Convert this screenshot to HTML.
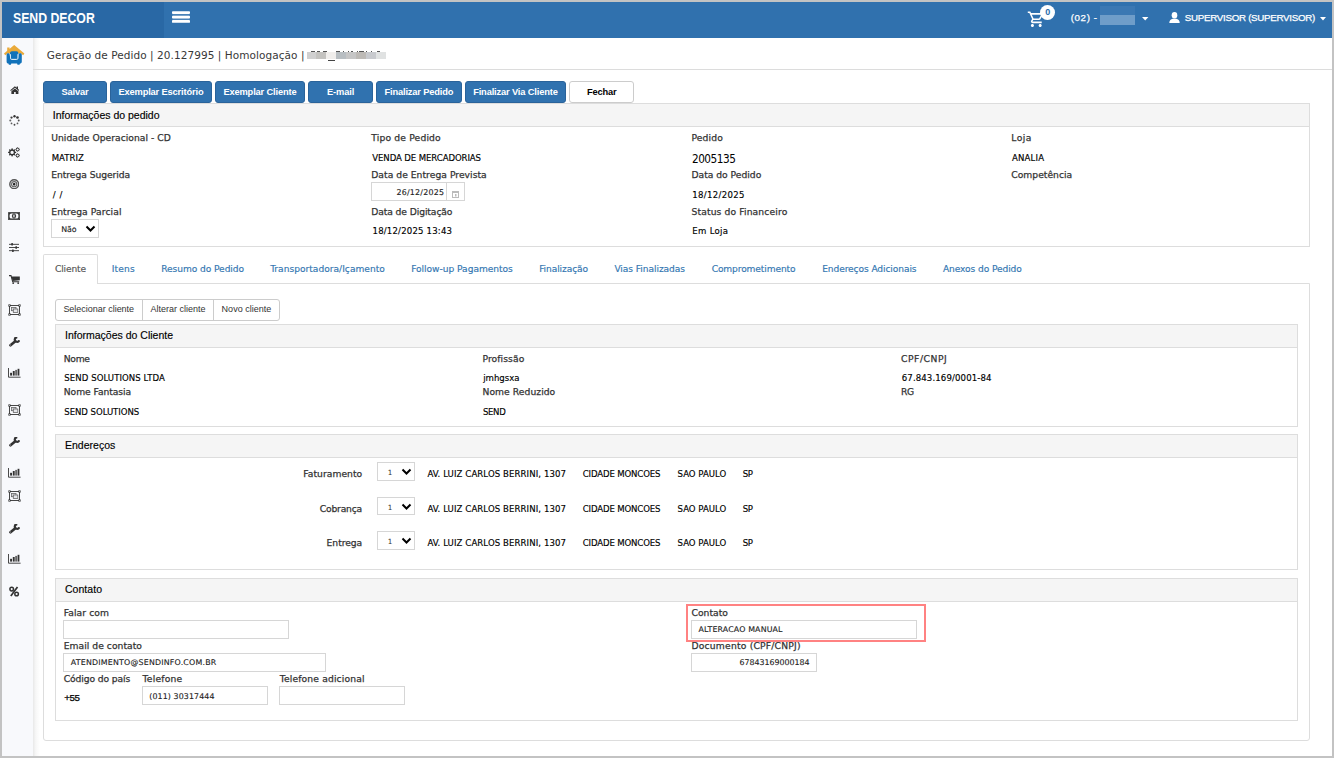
<!DOCTYPE html>
<html lang="pt-BR">
<head>
<meta charset="utf-8">
<title>Geração de Pedido</title>
<style>
html,body{margin:0;padding:0}
body{width:1334px;height:758px;overflow:hidden;background:#fff;position:relative;font-family:"Liberation Sans",sans-serif;font-size:10.5px}
div,span,svg{position:absolute;box-sizing:border-box}
.t{white-space:nowrap;line-height:1.2;transform-origin:0 50%}
#frame{left:0;top:0;width:1334px;height:758px;border:2px solid #c3c3c3;z-index:50;pointer-events:none}
#hdr{left:2px;top:2px;width:1330px;height:36px;background:#3071ae}
#logo{left:2px;top:2px;width:162px;height:36px;background:#2968a5}
#side{left:2px;top:38px;width:31px;height:718px;background:#f8f9fc}
#sideshadow{left:33px;top:38px;width:7px;height:718px;background:linear-gradient(to right,rgba(0,0,0,.09),rgba(0,0,0,.03) 40%,rgba(0,0,0,0))}
#tline{left:33px;top:69px;width:1299px;height:1px;background:#dcdcdc}
.bp{top:81px;height:22px;background:#3072af;border:1px solid #2a639a;border-radius:3px}
.bd{top:81px;height:22px;background:#fff;border:1px solid #ccc;border-radius:3px}
.panel{border:1px solid #ddd;background:#fff}
.ph{left:0;top:0;right:0;height:23px;background:#f5f5f5;border-bottom:1px solid #ddd}
.in{border:1px solid #d6d6d6;background:#fff}
#tabact{left:43px;top:254px;width:55px;height:30px;border:1px solid #ddd;border-bottom:0;border-radius:2px 2px 0 0;background:#fff}
#tabc{left:43px;top:283px;width:1267px;height:458px;border:1px solid #ddd;border-radius:0 0 3px 3px}
#bgrp{left:55px;top:299px;width:225px;height:22px;border:1px solid #ccc;border-radius:3px;background:#fff}
#bgrp i{position:absolute;top:0;width:1px;height:20px;background:#ccc}
#hl{left:686px;top:604px;width:240px;height:38px;border:2px solid #ff8282}
.blur{background:#d9d9d9}

.lbl{font-family:"DejaVu Sans", "Liberation Sans", sans-serif;font-size:9.2px;font-weight:400;color:#333;-webkit-text-stroke:0.25px #333}
.val{font-family:"DejaVu Sans Condensed", "DejaVu Sans", "Liberation Sans", sans-serif;font-size:9.5px;font-weight:400;color:#000;-webkit-text-stroke:0.15px #000;font-stretch:condensed}
.tab{font-family:"DejaVu Sans", "Liberation Sans", sans-serif;font-size:9.1px;font-weight:400;color:#3276b1;-webkit-text-stroke:0.15px #3276b1}
.taba{font-family:"DejaVu Sans", "Liberation Sans", sans-serif;font-size:9.1px;font-weight:400;color:#555;-webkit-text-stroke:0.15px #555}
.hd{font-family:"Liberation Sans", sans-serif;font-size:10.5px;font-weight:400;color:#000;-webkit-text-stroke:0.15px #000}
.btn{font-family:"Liberation Sans", sans-serif;font-size:9.3px;font-weight:700;color:#fff}
.btnd{font-family:"Liberation Sans", sans-serif;font-size:9.3px;font-weight:700;color:#000}
.bg{font-family:"Liberation Sans", sans-serif;font-size:9px;font-weight:400;color:#333}
.inp{font-family:"DejaVu Sans", "Liberation Sans", sans-serif;font-size:7.9px;font-weight:400;color:#222;-webkit-text-stroke:0.12px #222}
.sel1{font-family:"DejaVu Sans", "Liberation Sans", sans-serif;font-size:7.2px;font-weight:400;color:#333}
.title{font-family:"DejaVu Sans", "Liberation Sans", sans-serif;font-size:10.5px;font-weight:400;color:#383838}
.brand{font-family:"Liberation Sans", sans-serif;font-size:14px;font-weight:700;color:#fff}
.nav{font-family:"Liberation Sans", sans-serif;font-size:9.75px;font-weight:400;color:#fff;-webkit-text-stroke:0.25px #fff}
.vall{font-family:"Liberation Sans", sans-serif;font-size:9.75px;font-weight:400;color:#000;-webkit-text-stroke:0.25px #000}
.big{font-family:"DejaVu Sans Condensed", "DejaVu Sans", "Liberation Sans", sans-serif;font-size:11.7px;font-weight:400;color:#000;font-stretch:condensed}
.badge{font-family:"Liberation Sans", sans-serif;font-size:9px;font-weight:700;color:#2a6cab}
.pct{font-family:"Liberation Sans", sans-serif;font-size:12.5px;font-weight:700;color:#3a3a3a}
</style>
</head>
<body>
<div id="hdr"></div>
<div id="logo"></div>
<div id="side"></div>
<div id="sideshadow"></div>
<div id="tline"></div>
<svg style="left:4.4px;top:44.8px" width="20.4" height="20.2" viewBox="0 0 20.4 20.2"><path fill="#eaaa3a" d="M10.200 0L0 8.600l1.200 1.700 2.300-1.700h13.400l2.300 1.700 1.200-1.700z"/><path fill="#eaaa3a" d="M3.200 2.600h2.400v3.400l-2.400 2z"/><path fill="#1172ba" d="M2.600 9.800c0-2 2.800-2 3.100-0.300l0.500 4h8l0.500-4c0.300-1.700 3.100-1.700 3.100 0.300v6.700c0 1.400-0.800 2.100-1.800 2.100l-0.500 1.200h-2l-0.400-1.200H7.300l-0.400 1.200H4.900l-0.500-1.200c-1 0-1.800-0.700-1.800-2.100z"/><path fill="#1172ba" d="M6 8.200c0-1.300 0.900-2 1.900-2h4.600c1 0 1.900 0.700 1.900 2v5.600H6z"/><path fill="none" stroke="#f0f6fb" stroke-width="0.900" d="M6.500 9.200v4.100c0 0.800 0.500 1.200 1.200 1.200h5c0.700 0 1.200-0.400 1.200-1.200V9.200"/></svg>
<svg style="left:9.5px;top:85.7px" width="9.8" height="8.5" viewBox="0 0 12 10.2"><path fill="#333" d="M6 0.300L0.300 5.100l0.800 0.900L6 1.900l4.900 4.100 0.800-0.900-1.900-1.600V0.500H8.100v1.600z"/><path fill="#333" d="M6 2.900L1.700 6.400V10h3.300V7.100h2V10h3.300V6.400z"/></svg>
<svg style="left:8.9px;top:115.1px" width="11" height="11" viewBox="0 0 12 12"><circle cx="6.00" cy="1.40" r="1.3" fill="#333" opacity="1"/><circle cx="9.25" cy="2.75" r="1.45" fill="#333" opacity="1"/><circle cx="10.60" cy="6.00" r="1.05" fill="#333" opacity="0.85"/><circle cx="9.25" cy="9.25" r="0.95" fill="#333" opacity="0.8"/><circle cx="6.00" cy="10.60" r="1.0" fill="#333" opacity="0.9"/><circle cx="2.75" cy="9.25" r="0.95" fill="#333" opacity="0.8"/><circle cx="1.40" cy="6.00" r="1.1" fill="#333" opacity="0.75"/><circle cx="2.75" cy="2.75" r="1.25" fill="#333" opacity="0.95"/></svg>
<svg style="left:7.9px;top:147.1px" width="12" height="11" viewBox="0 0 12 11"><path fill="#333" fill-rule="evenodd" d="M8.18,5.00L8.18,5.80L7.00,6.28L6.78,6.83L7.27,8.00L6.70,8.57L5.53,8.08L4.98,8.30L4.50,9.48L3.70,9.48L3.22,8.30L2.67,8.08L1.50,8.57L0.93,8.00L1.42,6.83L1.20,6.28L0.02,5.80L0.02,5.00L1.20,4.52L1.42,3.97L0.93,2.80L1.50,2.23L2.67,2.72L3.22,2.50L3.70,1.32L4.50,1.32L4.98,2.50L5.53,2.72L6.70,2.23L7.27,2.80L6.78,3.97L7.00,4.52zM5.80,5.40A1.7,1.7 0 1 0 2.40,5.40A1.7,1.7 0 1 0 5.80,5.40z"/><path fill="#333" fill-rule="evenodd" d="M11.89,2.27L11.89,2.73L11.23,2.99L11.10,3.30L11.38,3.96L11.06,4.28L10.40,4.00L10.09,4.13L9.83,4.79L9.37,4.79L9.11,4.13L8.80,4.00L8.14,4.28L7.82,3.96L8.10,3.30L7.97,2.99L7.31,2.73L7.31,2.27L7.97,2.01L8.10,1.70L7.82,1.04L8.14,0.72L8.80,1.00L9.11,0.87L9.37,0.21L9.83,0.21L10.09,0.87L10.40,1.00L11.06,0.72L11.38,1.04L11.10,1.70L11.23,2.01zM10.70,2.50A1.1,1.1 0 1 0 8.50,2.50A1.1,1.1 0 1 0 10.70,2.50z"/><path fill="#333" fill-rule="evenodd" d="M11.89,8.27L11.89,8.73L11.23,8.99L11.10,9.30L11.38,9.96L11.06,10.28L10.40,10.00L10.09,10.13L9.83,10.79L9.37,10.79L9.11,10.13L8.80,10.00L8.14,10.28L7.82,9.96L8.10,9.30L7.97,8.99L7.31,8.73L7.31,8.27L7.97,8.01L8.10,7.70L7.82,7.04L8.14,6.72L8.80,7.00L9.11,6.87L9.37,6.21L9.83,6.21L10.09,6.87L10.40,7.00L11.06,6.72L11.38,7.04L11.10,7.70L11.23,8.01zM10.70,8.50A1.1,1.1 0 1 0 8.50,8.50A1.1,1.1 0 1 0 10.70,8.50z"/></svg>
<svg style="left:9px;top:178.9px" width="10.4" height="10.4" viewBox="0 0 10.4 10.4"><circle cx="5.2" cy="5.2" r="4.400" fill="none" stroke="#555" stroke-width="1.400"/><circle cx="5.2" cy="5.2" r="2.600" fill="none" stroke="#666" stroke-width="1.100"/><rect x="4" y="4" width="2.400" height="2.400" rx="0.700" fill="#222"/></svg>
<svg style="left:8.3px;top:212px" width="12" height="8" viewBox="0 0 12 8"><rect x="0" y="0" width="12" height="8" fill="#333"/><rect x="1.600" y="1.500" width="8.800" height="5" rx="1.600" fill="#f8f9fc"/><ellipse cx="6" cy="4" rx="1.700" ry="2.100" fill="none" stroke="#333" stroke-width="1"/><rect x="5.650" y="2.500" width="0.800" height="3" fill="#333"/><rect x="0.700" y="0.700" width="10.600" height="6.600" fill="none" stroke="#f8f9fc" stroke-width="0.3" opacity=".5"/></svg>
<svg style="left:9.2px;top:243px" width="10.2" height="9" viewBox="0 0 10.2 9"><rect x="0" y="0.85" width="10.2" height="0.9" fill="#333"/><rect x="2.30" y="0.00" width="1.600" height="2.600" rx="0.3" fill="#333"/><rect x="0" y="4.05" width="10.2" height="0.9" fill="#333"/><rect x="6.40" y="3.20" width="1.600" height="2.600" rx="0.3" fill="#333"/><rect x="0" y="7.25" width="10.2" height="0.9" fill="#333"/><rect x="3.10" y="6.40" width="1.600" height="2.600" rx="0.3" fill="#333"/></svg>
<svg style="left:9.2px;top:275px" width="10.8" height="9.1" viewBox="0 0 10.8 9.1"><path fill="none" stroke="#333" stroke-width="1.1" d="M0 0.6h2l1.700 6.200h6.500"/><path fill="#333" d="M2.600 1.600h8.200v3.600L3.600 6z"/><circle cx="4.200" cy="8.100" r="0.950" fill="#333"/><circle cx="9.200" cy="8.100" r="0.950" fill="#333"/></svg>
<svg style="left:8px;top:304px" width="13" height="12" viewBox="0 0 13 12"><rect x="1.5" y="1.5" width="10" height="9" fill="none" stroke="#333" stroke-width="0.9"/><rect x="3.5" y="3.5" width="4.5" height="3.200" fill="#d9dade" stroke="#666" stroke-width="0.8"/><rect x="5.300" y="5" width="4.500" height="3.500" fill="#e4e5e9" stroke="#666" stroke-width="0.8"/><rect x="0.40" y="0.40" width="2.200" height="2.200" fill="#333"/><rect x="1.10" y="1.10" width="0.800" height="0.800" fill="#f8f9fc"/><rect x="10.40" y="0.40" width="2.200" height="2.200" fill="#333"/><rect x="11.10" y="1.10" width="0.800" height="0.800" fill="#f8f9fc"/><rect x="0.40" y="9.40" width="2.200" height="2.200" fill="#333"/><rect x="1.10" y="10.10" width="0.800" height="0.800" fill="#f8f9fc"/><rect x="10.40" y="9.40" width="2.200" height="2.200" fill="#333"/><rect x="11.10" y="10.10" width="0.800" height="0.800" fill="#f8f9fc"/></svg>
<svg style="left:9.2px;top:337.3px" width="10.8" height="10" viewBox="0 0 10.8 10"><path fill="none" stroke="#333" stroke-width="2.700" stroke-linecap="round" d="M1.500 8.200L6.300 4.300"/><path fill="none" stroke="#333" stroke-width="2.200" d="M10.22 3.18A2.25 2.25 0 1 1 8.36 0.37"/><circle cx="1.600" cy="8.050" r="0.450" fill="#f8f9fc"/></svg>
<svg style="left:7.9px;top:368.3px" width="12.9" height="9.8" viewBox="0 0 12.9 9.8"><path fill="none" stroke="#333" stroke-width="0.9" d="M0.500 -0.200v9.400h12.100"/><rect x="2.100" y="4.800" width="1.900" height="2.800" fill="#333"/><rect x="4.800" y="3" width="1.900" height="4.600" fill="#333"/><rect x="7.200" y="1.900" width="1.900" height="5.700" fill="#666"/><rect x="9.600" y="0.800" width="1.800" height="6.800" fill="#333"/></svg>
<svg style="left:8px;top:404px" width="13" height="12" viewBox="0 0 13 12"><rect x="1.5" y="1.5" width="10" height="9" fill="none" stroke="#333" stroke-width="0.9"/><rect x="3.5" y="3.5" width="4.5" height="3.200" fill="#d9dade" stroke="#666" stroke-width="0.8"/><rect x="5.300" y="5" width="4.500" height="3.500" fill="#e4e5e9" stroke="#666" stroke-width="0.8"/><rect x="0.40" y="0.40" width="2.200" height="2.200" fill="#333"/><rect x="1.10" y="1.10" width="0.800" height="0.800" fill="#f8f9fc"/><rect x="10.40" y="0.40" width="2.200" height="2.200" fill="#333"/><rect x="11.10" y="1.10" width="0.800" height="0.800" fill="#f8f9fc"/><rect x="0.40" y="9.40" width="2.200" height="2.200" fill="#333"/><rect x="1.10" y="10.10" width="0.800" height="0.800" fill="#f8f9fc"/><rect x="10.40" y="9.40" width="2.200" height="2.200" fill="#333"/><rect x="11.10" y="10.10" width="0.800" height="0.800" fill="#f8f9fc"/></svg>
<svg style="left:9.2px;top:437.3px" width="10.8" height="10" viewBox="0 0 10.8 10"><path fill="none" stroke="#333" stroke-width="2.700" stroke-linecap="round" d="M1.500 8.200L6.300 4.300"/><path fill="none" stroke="#333" stroke-width="2.200" d="M10.22 3.18A2.25 2.25 0 1 1 8.36 0.37"/><circle cx="1.600" cy="8.050" r="0.450" fill="#f8f9fc"/></svg>
<svg style="left:7.9px;top:468.3px" width="12.9" height="9.8" viewBox="0 0 12.9 9.8"><path fill="none" stroke="#333" stroke-width="0.9" d="M0.500 -0.200v9.400h12.100"/><rect x="2.100" y="4.800" width="1.900" height="2.800" fill="#333"/><rect x="4.800" y="3" width="1.900" height="4.600" fill="#333"/><rect x="7.200" y="1.900" width="1.900" height="5.700" fill="#666"/><rect x="9.600" y="0.800" width="1.800" height="6.800" fill="#333"/></svg>
<svg style="left:8px;top:490.2px" width="13" height="12" viewBox="0 0 13 12"><rect x="1.5" y="1.5" width="10" height="9" fill="none" stroke="#333" stroke-width="0.9"/><rect x="3.5" y="3.5" width="4.5" height="3.200" fill="#d9dade" stroke="#666" stroke-width="0.8"/><rect x="5.300" y="5" width="4.500" height="3.500" fill="#e4e5e9" stroke="#666" stroke-width="0.8"/><rect x="0.40" y="0.40" width="2.200" height="2.200" fill="#333"/><rect x="1.10" y="1.10" width="0.800" height="0.800" fill="#f8f9fc"/><rect x="10.40" y="0.40" width="2.200" height="2.200" fill="#333"/><rect x="11.10" y="1.10" width="0.800" height="0.800" fill="#f8f9fc"/><rect x="0.40" y="9.40" width="2.200" height="2.200" fill="#333"/><rect x="1.10" y="10.10" width="0.800" height="0.800" fill="#f8f9fc"/><rect x="10.40" y="9.40" width="2.200" height="2.200" fill="#333"/><rect x="11.10" y="10.10" width="0.800" height="0.800" fill="#f8f9fc"/></svg>
<svg style="left:9.2px;top:523.5px" width="10.8" height="10" viewBox="0 0 10.8 10"><path fill="none" stroke="#333" stroke-width="2.700" stroke-linecap="round" d="M1.500 8.200L6.300 4.300"/><path fill="none" stroke="#333" stroke-width="2.200" d="M10.22 3.18A2.25 2.25 0 1 1 8.36 0.37"/><circle cx="1.600" cy="8.050" r="0.450" fill="#f8f9fc"/></svg>
<svg style="left:7.9px;top:554px" width="12.9" height="9.8" viewBox="0 0 12.9 9.8"><path fill="none" stroke="#333" stroke-width="0.9" d="M0.500 -0.200v9.400h12.100"/><rect x="2.100" y="4.800" width="1.900" height="2.800" fill="#333"/><rect x="4.800" y="3" width="1.900" height="4.600" fill="#333"/><rect x="7.200" y="1.900" width="1.900" height="5.700" fill="#666"/><rect x="9.600" y="0.800" width="1.800" height="6.800" fill="#333"/></svg>
<svg style="left:9px;top:585.5px" width="11" height="11" viewBox="0 0 11 11"><circle cx="2.700" cy="3.100" r="1.800" fill="none" stroke="#333" stroke-width="1.500"/><circle cx="7.600" cy="8" r="1.800" fill="none" stroke="#333" stroke-width="1.500"/><path fill="none" stroke="#333" stroke-width="1.700" d="M1.800 10.100L8.500 0.900"/></svg>
<!-- hamburger -->
<svg style="left:172px;top:11px" width="19" height="13" viewBox="0 0 19 13"><rect x="0.3" y="1" width="17.4" height="10.500" fill="#fff" opacity="0.13"/><g fill="#fff"><rect x="0" y="0.2" width="18" height="2.700" rx="0.9"/><rect x="0" y="4.800" width="18" height="2.600" rx="0.9"/><rect x="0" y="9.100" width="18" height="2.700" rx="0.9"/></g></svg>
<!-- cart -->
<svg style="left:1027px;top:9.5px" width="18.6" height="18.6" viewBox="0 0 24 24"><path fill="#fff" d="M15.55 13c.75 0 1.41-.41 1.75-1.030l3.580-6.490c.37-.66-.11-1.480-.87-1.480H5.210l-.94-2H1v2h2l3.600 7.590-1.350 2.440C4.520 15.370 5.480 17 7 17h12v-2H7l1.100-2h7.450zM6.160 6h12.150l-2.760 5H8.530L6.160 6zM7 18c-1.100 0-1.990.9-1.990 2S5.900 22 7 22s2-.9 2-2-.9-2-2-2zm10 0c-1.100 0-1.990.9-1.990 2s.890 2 1.990 2 2-.9 2-2-.9-2-2-2z"/></svg>
<div style="left:1040px;top:4.8px;width:15.2px;height:15.2px;border-radius:50%;background:#fff"></div>
<!-- blurred store name -->
<div style="left:1100px;top:6px;width:35px;height:19px;background:#3b78b3"></div>
<div style="left:1100px;top:15px;width:35px;height:10px;background:#6f9dc9"></div>
<svg style="left:1142px;top:17px" width="7" height="4" viewBox="0 0 7 4"><path d="M0 0h6.4L3.2 3.4z" fill="#fff"/></svg>
<!-- user -->
<svg style="left:1169px;top:12px" width="11" height="11" viewBox="0 0 11 11"><g fill="#fff"><ellipse cx="5.5" cy="3.2" rx="2.8" ry="3.2"/><path d="M0.3 11c0-3 1.6-4 3.4-4.3h3.6C9.100 7 10.700 8 10.700 11z"/></g></svg>
<svg style="left:1320px;top:17px" width="7" height="4" viewBox="0 0 7 4"><path d="M0 0h6L3 3.400z" fill="#fff"/></svg>
<!-- title blurred -->
<div style="left:306.9px;top:52px;width:9.6px;height:7px;background:#d0d0d0"></div>
<div style="left:316.2px;top:52px;width:10.1px;height:7px;background:#c4c3c0"></div>
<div style="left:326.0px;top:52px;width:10.2px;height:7px;background:#f0eeec"></div>
<div style="left:335.9px;top:52px;width:10.5px;height:7px;background:#b8bec2"></div>
<div style="left:346.1px;top:52px;width:10.2px;height:7px;background:#c6c6c6"></div>
<div style="left:356.0px;top:52px;width:10.3px;height:7px;background:#bdbab6"></div>
<div style="left:366.0px;top:52px;width:10.3px;height:7px;background:#c8cace"></div>
<div style="left:376.0px;top:52px;width:10.3px;height:7px;background:#e0e2e2"></div>
<div style="left:311.0px;top:51px;width:3.7px;height:1px;background:#555"></div>
<div style="left:317.2px;top:51px;width:2.9px;height:1px;background:#555"></div>
<div style="left:322.6px;top:51px;width:4.1px;height:1px;background:#555"></div>
<div style="left:335.8px;top:51px;width:4.1px;height:1px;background:#555"></div>
<div style="left:342.8px;top:51px;width:1.6px;height:1px;background:#555"></div>
<div style="left:348.1px;top:51px;width:1.2px;height:1px;background:#555"></div>
<div style="left:351.0px;top:51px;width:2.1px;height:1px;background:#555"></div>
<div style="left:356.8px;top:51px;width:1.6px;height:1px;background:#555"></div>
<div style="left:359.2px;top:51px;width:4.9px;height:1px;background:#555"></div>
<div style="left:365.8px;top:51px;width:1.2px;height:1px;background:#555"></div>
<div style="left:371.2px;top:51px;width:1.2px;height:1px;background:#555"></div>
<div style="left:377.4px;top:51px;width:2.9px;height:1px;background:#555"></div>
<div style="left:327.5px;top:60px;width:7.5px;height:1px;background:#444"></div>

<!-- buttons -->
<div class="bp" style="left:43px;width:64px"></div>
<div class="bp" style="left:110px;width:102px"></div>
<div class="bp" style="left:215px;width:90px"></div>
<div class="bp" style="left:308px;width:65px"></div>
<div class="bp" style="left:376px;width:86px"></div>
<div class="bp" style="left:465px;width:101px"></div>
<div class="bd" style="left:569px;width:65px"></div>

<!-- panel 1 -->
<div class="panel" style="left:43px;top:103px;width:1267px;height:144px"><div class="ph"></div></div>
<div class="in" style="left:51px;top:219px;width:48px;height:19px"></div>
<svg class="chev" style="left:84.500px;top:224.500px" width="11" height="8" viewBox="0 0 11 8"><path d="M1.500 1.500L5.500 5.500L9.500 1.500" fill="none" stroke="#000" stroke-width="2"/></svg>
<div class="in" style="left:371px;top:182px;width:76px;height:19px"></div>
<div class="in" style="left:446px;top:182px;width:19px;height:19px"></div>
<svg style="left:452px;top:191px" width="7" height="7" viewBox="0 0 7 7"><rect x="0.500" y="0.500" width="6" height="6" fill="none" stroke="#bbb"/><rect x="0.500" y="0.500" width="6" height="1.500" fill="#bbb"/><rect x="3" y="3" width="1.500" height="2.500" fill="#bbb"/></svg>

<!-- tabs -->
<div id="tabc"></div>
<div id="tabact"></div>
<div id="bgrp"><i style="left:86px"></i><i style="left:157px"></i></div>

<div class="panel" style="left:55px;top:324px;width:1243px;height:103px"><div class="ph"></div></div>
<div class="panel" style="left:55px;top:434px;width:1243px;height:136px"><div class="ph"></div></div>
<div class="panel" style="left:55px;top:578px;width:1243px;height:143px"><div class="ph"></div></div>

<div class="in" style="left:377px;top:462px;width:38px;height:19px"></div>
<div class="in" style="left:377px;top:497px;width:38px;height:18px"></div>
<div class="in" style="left:377px;top:531px;width:38px;height:19px"></div>
<svg class="chev" style="left:400.500px;top:468px" width="11" height="8" viewBox="0 0 11 8"><path d="M1.500 1.500L5.500 5.500L9.500 1.500" fill="none" stroke="#000" stroke-width="2"/></svg>
<svg class="chev" style="left:400.500px;top:502.500px" width="11" height="8" viewBox="0 0 11 8"><path d="M1.500 1.500L5.500 5.500L9.500 1.500" fill="none" stroke="#000" stroke-width="2"/></svg>
<svg class="chev" style="left:400.500px;top:537px" width="11" height="8" viewBox="0 0 11 8"><path d="M1.500 1.500L5.500 5.500L9.500 1.500" fill="none" stroke="#000" stroke-width="2"/></svg>

<div class="in" style="left:63px;top:620px;width:226px;height:19px"></div>
<div class="in" style="left:63px;top:653px;width:263px;height:19px"></div>
<div class="in" style="left:142px;top:686px;width:126px;height:19px"></div>
<div class="in" style="left:279px;top:686px;width:126px;height:19px"></div>
<div class="in" style="left:691px;top:620px;width:226px;height:19px"></div>
<div class="in" style="left:691px;top:653px;width:126px;height:19px"></div>
<div id="hl"></div>
<div id="frame"></div>

<div id="txt">
<span class="t brand" style="transform:scaleX(0.8756);left:12.80px;top:10.25px;">SEND DECOR</span>
<span class="t nav" style="letter-spacing:0.600px;left:1070.75px;top:12.00px;">(02) -</span>
<span class="t nav" style="letter-spacing:-0.283px;left:1184.80px;top:12.00px;">SUPERVISOR (SUPERVISOR)</span>
<span class="t badge" style="left:1045.30px;top:7.00px;">0</span>
<span class="t title" style="letter-spacing:0.062px;left:46.75px;top:49.00px;">Geração de Pedido | 20.127995 | Homologação |</span>
<span class="t btn" style="letter-spacing:-0.150px;left:61.41px;top:87.25px;">Salvar</span>
<span class="t btn" style="letter-spacing:-0.150px;left:118.43px;top:87.25px;">Exemplar Escritório</span>
<span class="t btn" style="letter-spacing:-0.150px;left:223.41px;top:87.25px;">Exemplar Cliente</span>
<span class="t btn" style="letter-spacing:-0.150px;left:327.07px;top:87.25px;">E-mail</span>
<span class="t btn" style="letter-spacing:-0.150px;left:384.48px;top:87.25px;">Finalizar Pedido</span>
<span class="t btn" style="letter-spacing:-0.150px;left:473.16px;top:87.25px;">Finalizar Via Cliente</span>
<span class="t btnd" style="letter-spacing:-0.150px;left:586.88px;top:87.25px;">Fechar</span>
<span class="t hd" style="letter-spacing:-0.004px;left:52.75px;top:109.00px;">Informações do pedido</span>
<span class="t lbl" style="letter-spacing:0.023px;left:51.25px;top:132.00px;">Unidade Operacional - CD</span>
<span class="t val" style="letter-spacing:-0.003px;left:51.75px;top:152.00px;">MATRIZ</span>
<span class="t lbl" style="letter-spacing:-0.052px;left:51.25px;top:169.00px;">Entrega Sugerida</span>
<span class="t val" style="letter-spacing:0.600px;left:52.75px;top:188.75px;">/ /</span>
<span class="t lbl" style="letter-spacing:0.092px;left:51.25px;top:206.00px;">Entrega Parcial</span>
<span class="t inp" style="letter-spacing:-0.089px;left:61.20px;top:225.00px;">Não</span>
<span class="t lbl" style="letter-spacing:0.163px;left:371.25px;top:132.00px;">Tipo de Pedido</span>
<span class="t val" style="letter-spacing:-0.087px;left:372.25px;top:152.00px;">VENDA DE MERCADORIAS</span>
<span class="t lbl" style="letter-spacing:0.034px;left:371.25px;top:169.00px;">Data de Entrega Prevista</span>
<span class="t inp" style="letter-spacing:0.224px;left:396.50px;top:188.00px;">26/12/2025</span>
<span class="t lbl" style="letter-spacing:-0.098px;left:371.25px;top:206.00px;">Data de Digitação</span>
<span class="t val" style="letter-spacing:0.194px;left:372.50px;top:225.25px;">18/12/2025 13:43</span>
<span class="t lbl" style="letter-spacing:0.109px;left:691.50px;top:132.00px;">Pedido</span>
<span class="t big" style="letter-spacing:-0.450px;left:691.90px;top:151.60px;">2005135</span>
<span class="t lbl" style="letter-spacing:-0.014px;left:691.50px;top:169.00px;">Data do Pedido</span>
<span class="t val" style="letter-spacing:0.332px;left:692.25px;top:188.75px;">18/12/2025</span>
<span class="t lbl" style="letter-spacing:0.120px;left:691.50px;top:206.00px;">Status do Financeiro</span>
<span class="t val" style="letter-spacing:0.312px;left:692.25px;top:225.25px;">Em Loja</span>
<span class="t lbl" style="letter-spacing:0.495px;left:1011.25px;top:132.00px;">Loja</span>
<span class="t val" style="letter-spacing:0.156px;left:1012.00px;top:152.00px;">ANALIA</span>
<span class="t lbl" style="letter-spacing:0.020px;left:1011.25px;top:169.00px;">Competência</span>
<span class="t taba" style="letter-spacing:-0.154px;left:55.00px;top:264.00px;">Cliente</span>
<span class="t tab" style="letter-spacing:0.214px;left:111.65px;top:264.00px;">Itens</span>
<span class="t tab" style="letter-spacing:-0.066px;left:161.15px;top:264.00px;">Resumo do Pedido</span>
<span class="t tab" style="letter-spacing:0.006px;left:270.15px;top:264.00px;">Transportadora/Içamento</span>
<span class="t tab" style="letter-spacing:-0.032px;left:411.15px;top:264.00px;">Follow-up Pagamentos</span>
<span class="t tab" style="letter-spacing:-0.102px;left:539.15px;top:264.00px;">Finalização</span>
<span class="t tab" style="letter-spacing:-0.065px;left:614.40px;top:264.00px;">Vias Finalizadas</span>
<span class="t tab" style="letter-spacing:-0.114px;left:711.65px;top:264.00px;">Comprometimento</span>
<span class="t tab" style="letter-spacing:-0.096px;left:822.15px;top:264.00px;">Endereços Adicionais</span>
<span class="t tab" style="letter-spacing:-0.093px;left:942.90px;top:264.00px;">Anexos do Pedido</span>
<span class="t bg" style="letter-spacing:-0.020px;left:63.40px;top:303.50px;">Selecionar cliente</span>
<span class="t bg" style="letter-spacing:-0.002px;left:150.40px;top:303.50px;">Alterar cliente</span>
<span class="t bg" style="letter-spacing:0.015px;left:221.60px;top:303.50px;">Novo cliente</span>
<span class="t hd" style="letter-spacing:0.001px;left:65.00px;top:329.00px;">Informações do Cliente</span>
<span class="t lbl" style="letter-spacing:-0.286px;left:63.75px;top:353.00px;">Nome</span>
<span class="t val" style="letter-spacing:0.076px;left:64.25px;top:372.25px;">SEND SOLUTIONS LTDA</span>
<span class="t lbl" style="letter-spacing:-0.052px;left:63.75px;top:386.25px;">Nome Fantasia</span>
<span class="t val" style="letter-spacing:-0.038px;left:64.25px;top:406.00px;">SEND SOLUTIONS</span>
<span class="t lbl" style="letter-spacing:0.070px;left:482.50px;top:353.00px;">Profissão</span>
<span class="t val" style="letter-spacing:-0.008px;left:483.25px;top:372.25px;">jmhgsxa</span>
<span class="t lbl" style="letter-spacing:0.052px;left:482.50px;top:386.25px;">Nome Reduzido</span>
<span class="t val" style="letter-spacing:-0.354px;left:483.00px;top:406.00px;">SEND</span>
<span class="t lbl" style="letter-spacing:0.554px;left:901.00px;top:353.00px;">CPF/CNPJ</span>
<span class="t val" style="letter-spacing:0.131px;left:901.75px;top:372.25px;">67.843.169/0001-84</span>
<span class="t lbl" style="letter-spacing:-0.450px;left:901.00px;top:386.25px;">RG</span>
<span class="t hd" style="letter-spacing:0.006px;left:65.00px;top:439.00px;">Endereços</span>
<span class="t lbl" style="letter-spacing:0.044px;left:303.25px;top:468.00px;">Faturamento</span>
<span class="t sel1" style="left:387.70px;top:469.00px;">1</span>
<span class="t val" style="letter-spacing:0.100px;left:427.50px;top:468.00px;">AV. LUIZ CARLOS BERRINI, 1307</span>
<span class="t val" style="letter-spacing:-0.132px;left:582.75px;top:468.00px;">CIDADE MONCOES</span>
<span class="t val" style="letter-spacing:0.027px;left:677.50px;top:468.00px;">SAO PAULO</span>
<span class="t val" style="letter-spacing:-0.344px;left:742.75px;top:468.00px;">SP</span>
<span class="t lbl" style="letter-spacing:-0.183px;left:319.75px;top:503.00px;">Cobrança</span>
<span class="t sel1" style="left:387.70px;top:504.00px;">1</span>
<span class="t val" style="letter-spacing:0.100px;left:427.50px;top:503.00px;">AV. LUIZ CARLOS BERRINI, 1307</span>
<span class="t val" style="letter-spacing:-0.132px;left:582.75px;top:503.00px;">CIDADE MONCOES</span>
<span class="t val" style="letter-spacing:0.027px;left:677.50px;top:503.00px;">SAO PAULO</span>
<span class="t val" style="letter-spacing:-0.344px;left:742.75px;top:503.00px;">SP</span>
<span class="t lbl" style="letter-spacing:-0.045px;left:326.60px;top:537.00px;">Entrega</span>
<span class="t sel1" style="left:387.70px;top:538.00px;">1</span>
<span class="t val" style="letter-spacing:0.100px;left:427.50px;top:537.00px;">AV. LUIZ CARLOS BERRINI, 1307</span>
<span class="t val" style="letter-spacing:-0.132px;left:582.75px;top:537.00px;">CIDADE MONCOES</span>
<span class="t val" style="letter-spacing:0.027px;left:677.50px;top:537.00px;">SAO PAULO</span>
<span class="t val" style="letter-spacing:-0.344px;left:742.75px;top:537.00px;">SP</span>
<span class="t hd" style="letter-spacing:0.036px;left:65.00px;top:583.00px;">Contato</span>
<span class="t lbl" style="letter-spacing:0.084px;left:63.75px;top:607.00px;">Falar com</span>
<span class="t lbl" style="letter-spacing:0.031px;left:63.75px;top:640.00px;">Email de contato</span>
<span class="t inp" style="letter-spacing:0.189px;left:70.75px;top:658.00px;">ATENDIMENTO@SENDINFO.COM.BR</span>
<span class="t lbl" style="letter-spacing:-0.113px;left:63.75px;top:673.00px;">Código do país</span>
<span class="t lbl" style="letter-spacing:0.214px;left:142.50px;top:673.00px;">Telefone</span>
<span class="t lbl" style="letter-spacing:0.138px;left:279.75px;top:673.00px;">Telefone adicional</span>
<span class="t vall" style="letter-spacing:-0.450px;left:64.25px;top:691.50px;">+55</span>
<span class="t inp" style="letter-spacing:0.105px;left:149.25px;top:691.50px;">(011) 30317444</span>
<span class="t lbl" style="letter-spacing:0.029px;left:691.50px;top:607.00px;">Contato</span>
<span class="t inp" style="letter-spacing:0.126px;left:698.50px;top:625.00px;">ALTERACAO MANUAL</span>
<span class="t lbl" style="letter-spacing:0.201px;left:691.50px;top:640.00px;">Documento (CPF/CNPJ)</span>
<span class="t inp" style="letter-spacing:-0.023px;left:739.50px;top:658.00px;">67843169000184</span>
</div>
</body>
</html>
